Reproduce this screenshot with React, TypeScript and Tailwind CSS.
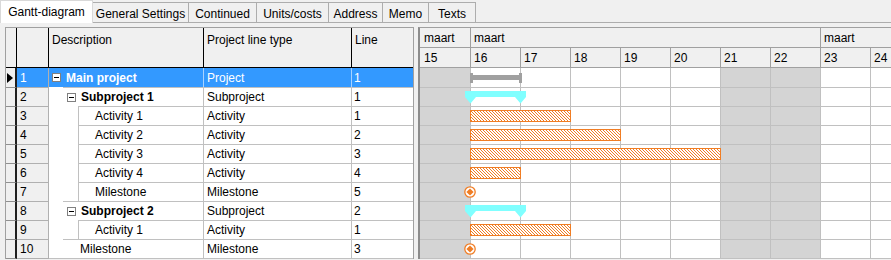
type Row = { level: 0 | 1 | 2; name: string; type: string; line: number; branch?: boolean };
type Bar = { kind: 'summary' | 'group' | 'task' | 'milestone'; days: number };

const rows: Row[] = [
  { level: 0, name: 'Main project', type: 'Project', line: 1, branch: true },
  { level: 1, name: 'Subproject 1', type: 'Subproject', line: 1, branch: true },
  { level: 2, name: 'Activity 1', type: 'Activity', line: 1 },
  { level: 2, name: 'Activity 2', type: 'Activity', line: 2 },
  { level: 2, name: 'Activity 3', type: 'Activity', line: 3 },
  { level: 2, name: 'Activity 4', type: 'Activity', line: 4 },
  { level: 2, name: 'Milestone', type: 'Milestone', line: 5 },
  { level: 1, name: 'Subproject 2', type: 'Subproject', line: 2, branch: true },
  { level: 2, name: 'Activity 1', type: 'Activity', line: 1 },
  { level: 1, name: 'Milestone', type: 'Milestone', line: 3 },
];

const bars: Bar[] = [
  { kind: 'summary', days: 1 },
  { kind: 'group', days: 1 },
  { kind: 'task', days: 2 },
  { kind: 'task', days: 3 },
  { kind: 'task', days: 5 },
  { kind: 'task', days: 1 },
  { kind: 'milestone', days: 0 },
  { kind: 'group', days: 1 },
  { kind: 'task', days: 2 },
  { kind: 'milestone', days: 0 },
];

const tabs = [
  { label: 'General Settings', w: 'w-[96px]' },
  { label: 'Continued', w: 'w-[68px]' },
  { label: 'Units/costs', w: 'w-[72px]' },
  { label: 'Address', w: 'w-[54px]' },
  { label: 'Memo', w: 'w-[46px]' },
  { label: 'Texts', w: 'w-[47px]' },
];

const days = [15, 16, 17, 18, 19, 20, 21, 22, 23, 24];
const grayDays = [15, 21, 22];
const orange = '#f07d24';

function MinusBox() {
  return (
    <span className="w-[9px] h-[9px] shrink-0 border border-[#808080] bg-white flex items-center justify-center">
      <span className="w-[5px] h-px bg-black" />
    </span>
  );
}

function LeftRow({ r, i }: { r: Row; i: number }) {
  const sel = i === 0;
  const last = i === rows.length - 1;
  const t = i > 0 ? 'border-t' : '';
  const b = last ? 'border-b' : '';
  const h = last ? 'h-[20px]' : 'h-[19px]';

  let inner = 'pl-[3px] gap-[5px]';
  if (r.level === 1) inner = r.branch ? 'pl-[4px] gap-[5px]' : 'pl-[17px]';
  if (r.level === 2) inner = 'border-l pl-[16px]';

  return (
    <div className={`flex ${h}`}>
      <div className={`w-[11px] shrink-0 bg-[#f0f0f0] border-r-2 border-r-[#202020] flex items-center ${t} ${b} border-t-[#909090] border-b-[#909090]`}>
        {sel && (
          <svg width="6" height="10" viewBox="0 0 6 10" className="ml-[1px]">
            <path d="M0 0 L6 5 L0 10 Z" fill="#000" />
          </svg>
        )}
      </div>
      <div className={`w-[32px] shrink-0 border-r flex items-center pl-[3px] ${t} ${b} border-[#b0b0b0] ${sel ? 'bg-[#3399ff] text-white' : 'bg-[#f0f0f0]'}`}>
        {i + 1}
      </div>
      <div className={`w-[155px] shrink-0 flex border-r ${sel ? 'bg-[#3399ff] border-r-[#a8d2ff]' : 'bg-white border-r-[#c0c0c0]'}`}>
        {r.level === 1 && <div className={`w-[14px] shrink-0 border-[#c0c0c0] ${b}`} />}
        {r.level === 2 && <div className={`w-[29px] shrink-0 border-[#c0c0c0] ${b}`} />}
        <div className={`flex-1 flex items-center border-[#c0c0c0] ${t} ${b} ${inner} ${sel ? 'text-white' : ''}`}>
          {r.branch && <MinusBox />}
          <span className={r.branch ? 'font-bold' : ''}>{r.name}</span>
        </div>
      </div>
      <div className={`w-[148px] shrink-0 border-r flex items-center pl-[3px] ${t} ${b} ${sel ? 'bg-[#3399ff] text-white border-[#a8d2ff]' : 'bg-white border-[#c0c0c0]'}`}>
        {r.type}
      </div>
      <div className={`flex-1 flex items-center pl-[2px] ${t} ${b} border-[#c0c0c0] ${sel ? 'bg-[#3399ff] text-white' : 'bg-white'}`}>
        {r.line}
      </div>
    </div>
  );
}

function BarView({ bar, i }: { bar: Bar; i: number }) {
  if (bar.kind === 'summary') {
    return (
      <div className="absolute top-[5px] flex h-[10px]" style={{ left: 50, width: 52 }}>
        <div className="w-[3px] h-full bg-[#a0a0a0]" />
        <div className="flex-1 h-[5px] mt-[2px] bg-[#a0a0a0]" />
        <div className="w-[3px] h-full bg-[#a0a0a0]" />
      </div>
    );
  }
  if (bar.kind === 'group') {
    return (
      <svg width="61" height="13" viewBox="0 0 61 13" className="absolute top-[3px]" style={{ left: 45 }}>
        <path d="M0 0 H61 V6 L55.5 12.5 L50 6 H11 L5.5 12.5 L0 6 Z" fill="#80ffff" />
      </svg>
    );
  }
  if (bar.kind === 'milestone') {
    return (
      <svg width="12" height="12" viewBox="0 0 12 12" className="absolute top-[3px]" style={{ left: 44 }}>
        <circle cx="6" cy="6" r="5.2" fill="#fff" stroke={orange} strokeWidth="1.3" />
        <path d="M6 2.4 L9.6 6 L6 9.6 L2.4 6 Z" fill={orange} />
      </svg>
    );
  }
  const w = bar.days * 50 + 1;
  return (
    <svg width={w} height="12" className="absolute top-[3px]" style={{ left: 50 }} shapeRendering="crispEdges">
      <defs>
        <pattern id={`hatch${i}`} width="3" height="3" patternUnits="userSpaceOnUse">
          <rect x="0" y="0" width="1" height="1" fill={orange} />
          <rect x="1" y="1" width="1" height="1" fill={orange} />
          <rect x="2" y="2" width="1" height="1" fill={orange} />
        </pattern>
      </defs>
      <rect x="0" y="0" width={w} height="12" fill="#fff" />
      <rect x="0" y="0" width={w} height="12" fill={`url(#hatch${i})`} />
      <rect x="0.5" y="0.5" width={w - 1} height="11" fill="none" stroke={orange} />
    </svg>
  );
}

function RightRow({ i }: { i: number }) {
  const last = i === rows.length - 1;
  const t = i > 0 ? 'border-t' : '';
  const b = last ? 'border-b' : '';
  const h = last ? 'h-[20px]' : 'h-[19px]';
  return (
    <div className={`relative flex ${h} ${t} ${b} border-[#c0c0c0]`}>
      {days.map((d, k) => (
        <div
          key={d}
          className={`w-[50px] shrink-0 ${k > 0 ? 'border-l border-[#c0c0c0]' : ''} ${grayDays.includes(d) ? 'bg-[#d4d4d4]' : 'bg-white'}`}
        />
      ))}
      <BarView bar={bars[i]} i={i} />
    </div>
  );
}

export default function App() {
  return (
    <div className="w-[891px] h-[260px] overflow-hidden bg-[#f0f0f0] text-[12px] leading-[14px] text-black font-['Liberation_Sans',Arial,sans-serif]">
      {/* Tabs */}
      <div className="flex h-[23px] items-end">
        <div className="w-[93px] h-[23px] shrink-0 bg-white border-l border-t border-r border-[#d9d9d9] flex items-center justify-center">
          Gantt-diagram
        </div>
        {tabs.map(tab => (
          <div
            key={tab.label}
            className={`${tab.w} h-[21px] shrink-0 bg-[#f0f0f0] border-t border-r border-b border-[#adadad] flex justify-center pt-[4px] whitespace-nowrap`}
          >
            {tab.label}
          </div>
        ))}
        <div className="flex-1 h-[21px] border-b border-[#adadad]" />
      </div>

      <div className="flex pt-[4px] pl-[5px]">
        {/* Left grid */}
        <div className="w-[409px] shrink-0 border-l border-t border-r border-[#a0a0a0] bg-white">
          <div className="flex h-[40px] border-b border-black bg-[#f0f0f0]">
            <div className="w-[11px] shrink-0 border-r border-black" />
            <div className="w-[32px] shrink-0 border-r border-black" />
            <div className="w-[155px] shrink-0 border-r border-black pl-[3px] pt-[5px]">Description</div>
            <div className="w-[148px] shrink-0 border-r border-black pl-[3px] pt-[5px]">Project line type</div>
            <div className="flex-1 pl-[3px] pt-[5px]">Line</div>
          </div>
          {rows.map((r, i) => (
            <LeftRow key={i} r={r} i={i} />
          ))}
        </div>

        {/* Splitter */}
        <div className="w-[4px] shrink-0" />

        {/* Right grid */}
        <div className="flex-1 min-w-0 overflow-hidden border-t border-l-2 border-t-[#a0a0a0] border-l-[#8c8c8c]">
          <div className="flex h-[20px] border-b border-[#a0a0a0] bg-[#f0f0f0]">
            <div className="w-[50px] shrink-0 pl-[4px] flex items-center">maart</div>
            <div className="w-[350px] shrink-0 border-l border-[#a0a0a0] pl-[3px] flex items-center">maart</div>
            <div className="w-[100px] shrink-0 border-l border-[#a0a0a0] pl-[3px] flex items-center">maart</div>
          </div>
          <div className="flex h-[20px] border-b border-[#a0a0a0] bg-[#f0f0f0]">
            {days.map((d, k) => (
              <div
                key={d}
                className={`w-[50px] shrink-0 flex items-center ${k > 0 ? 'border-l border-[#a0a0a0] pl-[3px]' : 'pl-[4px]'}`}
              >
                {d}
              </div>
            ))}
          </div>
          {rows.map((_, i) => (
            <RightRow key={i} i={i} />
          ))}
        </div>
      </div>
    </div>
  );
}
